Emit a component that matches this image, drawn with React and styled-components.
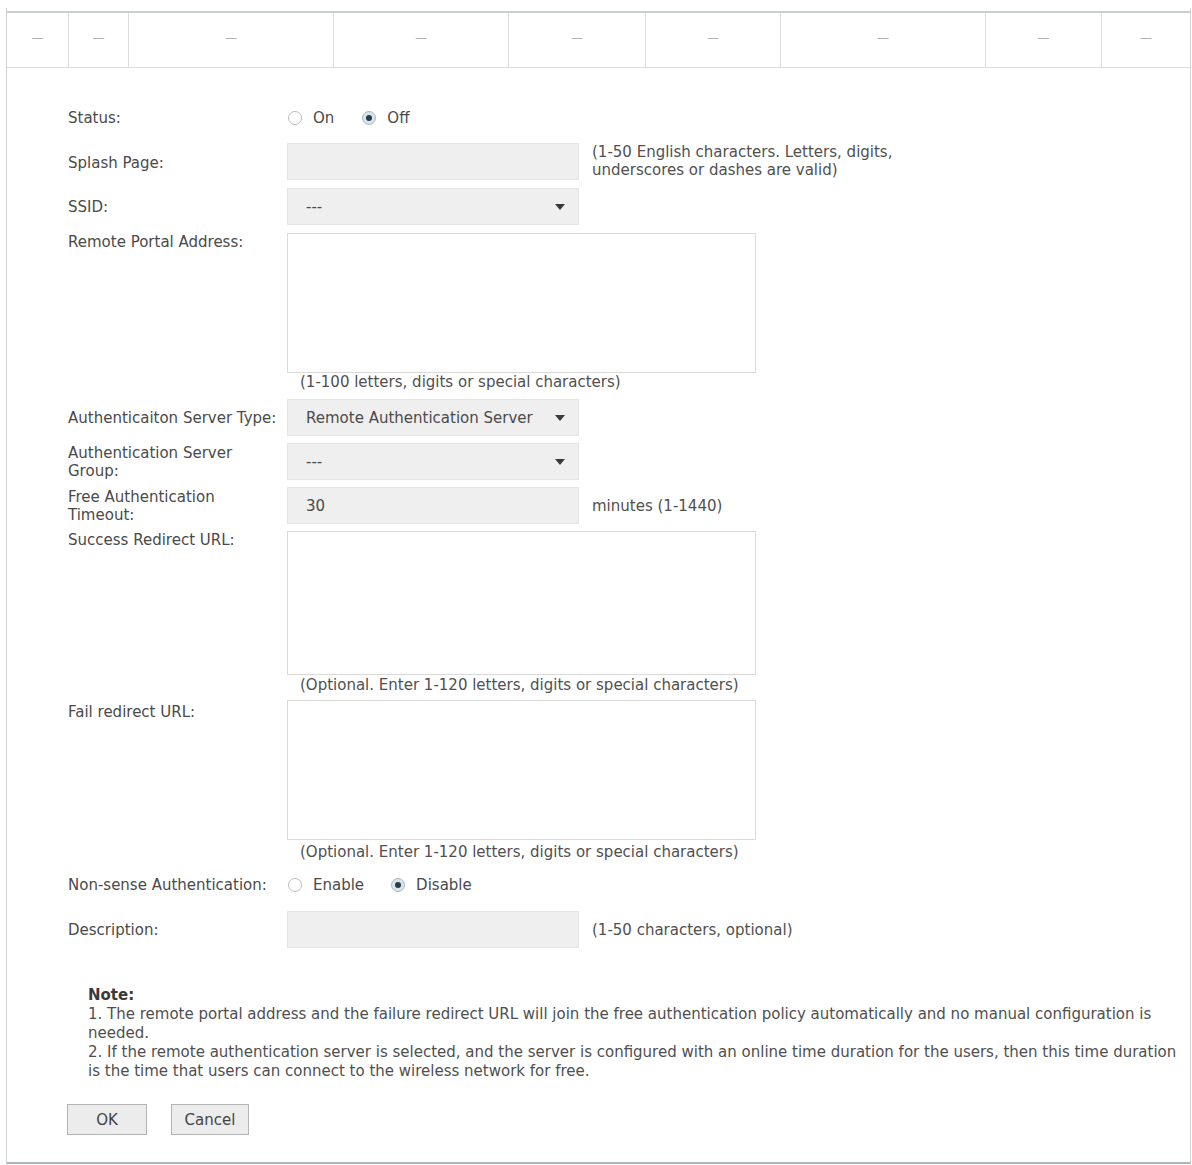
import React from 'react';
import styled, { createGlobalStyle } from 'styled-components';

const Global = createGlobalStyle`
  html, body { margin: 0; padding: 0; background: #fff; }
  body { font-family: "DejaVu Sans", Verdana, sans-serif; color: #4d4d4d; }
`;

const Page = styled.div`
  padding: 8px 1px 0 6px;
  width: 1192px;
  box-sizing: border-box;
`;

const Frame = styled.div`
  height: 1156px;
  box-sizing: border-box;
  border-left: 1px solid #cfd3d3;
  border-right: 1px solid #cfd3d3;
  border-bottom: 2px solid #a7b6ba;
  display: flex;
  flex-direction: column;
`;

const Table = styled.div`
  margin-top: 3px;
  display: grid;
  grid-template-columns: 61px 60px 205px 175px 137px 135px 205px 116px 1fr;
  height: 54px;
  border-top: 2px solid #c9cfcf;
  border-bottom: 1px solid #dcdcdc;
`;

const Cell = styled.div`
  display: flex;
  align-items: center;
  justify-content: center;
  padding-bottom: 4px;
  border-left: ${p => (p.$first ? 'none' : '1px solid #dcdcdc')};
  font-size: 12px;
  color: #b0b0b0;
`;

const Form = styled.div`
  padding-left: 61px;
  display: flex;
  flex-direction: column;
`;

const Row = styled.div`
  display: flex;
  align-items: ${p => (p.$top ? 'flex-start' : 'center')};
  min-height: ${p => p.$h || 37}px;
  margin-top: ${p => p.$mt}px;
`;

const Label = styled.div`
  width: 219px;
  flex: none;
  font-size: 15px;
  line-height: 18px;
  color: #4a4a4a;
  margin-top: ${p => p.$mt || 0}px;
`;

const Control = styled.div`
  display: flex;
  flex-direction: column;
`;

const Line = styled.div`
  display: flex;
  align-items: ${p => (p.$top ? 'flex-start' : 'center')};
`;

const Input = styled.div`
  width: 292px;
  height: 37px;
  box-sizing: border-box;
  background: #efefef;
  border: 1px solid #e4e4e4;
  display: flex;
  align-items: center;
  padding: 0 18px;
  font-size: 15px;
  color: #4a4a4a;
`;

const Select = styled(Input)`
  justify-content: space-between;
  padding-right: 13px;
`;

const Arrow = styled.span`
  width: 0;
  height: 0;
  border-left: 5px solid transparent;
  border-right: 5px solid transparent;
  border-top: 6px solid #3a3a3a;
`;

const TextArea = styled.div`
  width: 469px;
  height: ${p => p.$h}px;
  box-sizing: border-box;
  background: #fff;
  border: 1px solid #dadada;
`;

const Hint = styled.div`
  font-size: 15px;
  line-height: 18px;
  color: #505050;
  margin-left: ${p => p.$ml || 0}px;
  margin-top: ${p => p.$mt || 0}px;
`;

const Radios = styled.div`
  display: flex;
  align-items: center;
  font-size: 15px;
  color: #4a4a4a;
`;

const RadioItem = styled.label`
  display: flex;
  align-items: center;
  margin-right: ${p => p.$mr || 0}px;
`;

const Circle = styled.span`
  width: 14px;
  height: 14px;
  box-sizing: border-box;
  border-radius: 50%;
  border: 1px solid ${p => (p.$on ? '#a9b9c3' : '#bdbdbd')};
  background: ${p => (p.$on ? '#d9e4ea' : '#fff')};
  margin: 0 11px 0 1px;
  display: flex;
  align-items: center;
  justify-content: center;
  &::after {
    content: '';
    display: ${p => (p.$on ? 'block' : 'none')};
    width: 6px;
    height: 6px;
    border-radius: 50%;
    background: #2c3b48;
  }
`;

const Note = styled.div`
  margin-top: 38px;
  padding-left: 20px;
  font-size: 15px;
  line-height: 19px;
  color: #4f4f4f;
  white-space: nowrap;
  b { color: #3a3a3a; }
`;

const Buttons = styled.div`
  display: flex;
  gap: 24px;
  margin-top: 23px;
  margin-left: -1px;
`;

const Button = styled.button`
  width: ${p => p.$w}px;
  height: 31px;
  background: #ececec;
  border: 1px solid #b3b3b3;
  font-family: inherit;
  font-size: 15px;
  color: #444;
  padding: 0;
`;

const cols = Array.from({ length: 9 });

const Radio = ({ label, on, mr }) => (
  <RadioItem $mr={mr}>
    <Circle $on={on} />
    {label}
  </RadioItem>
);

export default function App() {
  return (
    <Page>
      <Global />
      <Frame>
        <Table>
          {cols.map((_, i) => (
            <Cell key={i} $first={i === 0}>—</Cell>
          ))}
        </Table>
        <Form>
          <Row $mt={35} $h={30}>
            <Label>Status:</Label>
            <Radios>
              <Radio label="On" mr={27} />
              <Radio label="Off" on />
            </Radios>
          </Row>
          <Row $mt={10} $top>
            <Label $mt={11}>Splash Page:</Label>
            <Line $top>
              <Input />
              <Hint $ml={13}>
                (1-50 English characters. Letters, digits,<br />
                underscores or dashes are valid)
              </Hint>
            </Line>
          </Row>
          <Row $mt={8}>
            <Label>SSID:</Label>
            <Select>---<Arrow /></Select>
          </Row>
          <Row $mt={8} $top>
            <Label>Remote Portal Address:</Label>
            <Control>
              <TextArea $h={140} />
              <Hint $ml={13}>(1-100 letters, digits or special characters)</Hint>
            </Control>
          </Row>
          <Row $mt={8}>
            <Label>Authenticaiton Server Type:</Label>
            <Select>Remote Authentication Server<Arrow /></Select>
          </Row>
          <Row $mt={7}>
            <Label>Authentication Server<br />Group:</Label>
            <Select>---<Arrow /></Select>
          </Row>
          <Row $mt={7}>
            <Label>Free Authentication<br />Timeout:</Label>
            <Line>
              <Input>30</Input>
              <Hint $ml={13}>minutes (1-1440)</Hint>
            </Line>
          </Row>
          <Row $mt={7} $top>
            <Label>Success Redirect URL:</Label>
            <Control>
              <TextArea $h={144} />
              <Hint $ml={13} $mt={1}>(Optional. Enter 1-120 letters, digits or special characters)</Hint>
            </Control>
          </Row>
          <Row $mt={6} $top>
            <Label $mt={3}>Fail redirect URL:</Label>
            <Control>
              <TextArea $h={140} />
              <Hint $ml={13} $mt={3}>(Optional. Enter 1-120 letters, digits or special characters)</Hint>
            </Control>
          </Row>
          <Row $mt={9} $h={30}>
            <Label>Non-sense Authentication:</Label>
            <Radios>
              <Radio label="Enable" mr={26} />
              <Radio label="Disable" on />
            </Radios>
          </Row>
          <Row $mt={11}>
            <Label>Description:</Label>
            <Line>
              <Input />
              <Hint $ml={13}>(1-50 characters, optional)</Hint>
            </Line>
          </Row>
          <Note>
            <b>Note:</b>
            <br />
            1. The remote portal address and the failure redirect URL will join the free authentication policy automatically and no manual configuration is
            <br />
            needed.
            <br />
            2. If the remote authentication server is selected, and the server is configured with an online time duration for the users, then this time duration
            <br />
            is the time that users can connect to the wireless network for free.
          </Note>
          <Buttons>
            <Button $w={80}>OK</Button>
            <Button $w={78}>Cancel</Button>
          </Buttons>
        </Form>
      </Frame>
    </Page>
  );
}
